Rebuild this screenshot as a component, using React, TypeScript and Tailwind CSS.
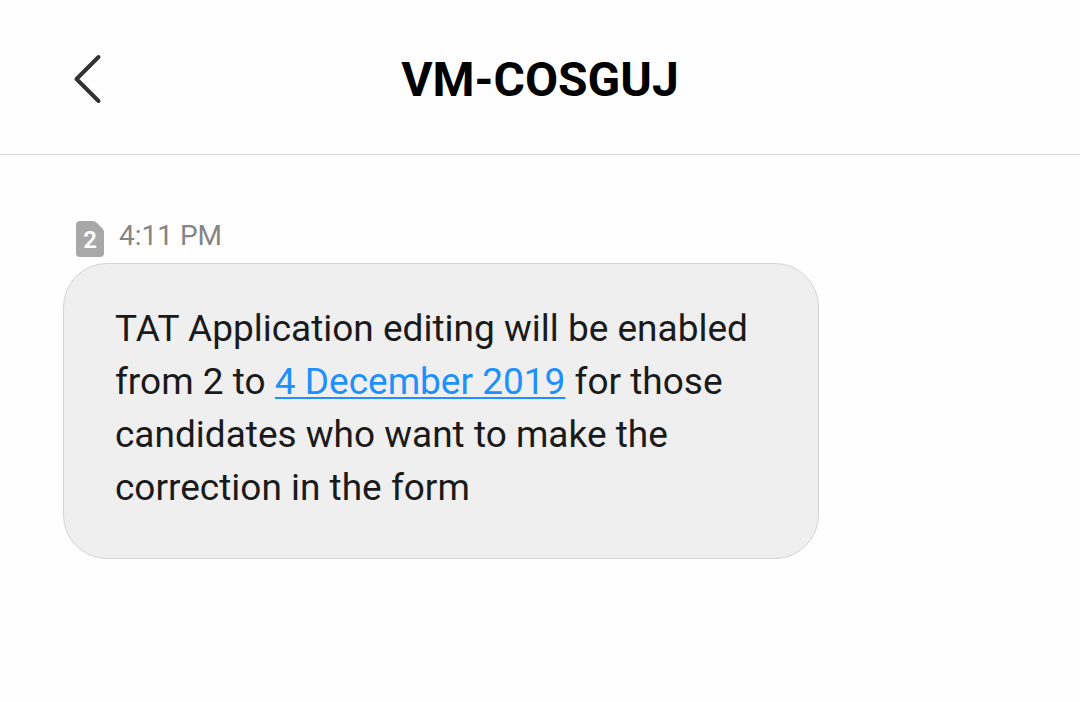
export default function App() {
  return (
    <div className="min-h-screen bg-[#fefefe] font-['Roboto',sans-serif]">
      <header className="grid h-[155px] grid-cols-[1fr_auto_1fr] items-center border-b border-[#dcdcdc] px-[70px] pt-[5px]">
        <button type="button" aria-label="Back" className="w-9">
          <svg viewBox="0 0 36 56" className="h-14 w-9" fill="none" stroke="#333" strokeWidth="4">
            <path d="M28.5 5 6.500 27 28.500 49" strokeLinecap="round" strokeLinejoin="round" />
          </svg>
        </button>
        <h1 className="text-[48px] leading-[56px] font-bold text-black">VM-COSGUJ</h1>
      </header>
      <main className="px-[63px] pt-[65px]">
        <div className="flex h-[43px] items-start gap-[15px] pl-[13px]">
          <svg viewBox="0 0 28 37" className="h-[37px] w-7" role="img" aria-label="SIM 2">
            <path d="M4 1H17Q19 1 20.500 2.500L26.500 8.500Q28 10 28 12V33Q28 37 24 37H4Q0 37 0 33V5Q0 1 4 1Z" fill="#a8a8a8" />
            <text x="14" y="28" textAnchor="middle" fontSize="24" fontWeight="600" fill="#fff">2</text>
          </svg>
          <time className="text-[28px] leading-8 text-[#858585]">4:11 PM</time>
        </div>
        <p className="w-fit max-w-[756px] rounded-[44px] border border-[#d4d4d4] bg-[#efefef] px-[51px] pt-[38px] pb-11 text-[37px] leading-[53px] text-[#1a1a1a]">
          TAT Application editing will be enabled from 2 to{" "}
          <a href="#date" className="text-[#1e90fa] underline decoration-2 underline-offset-3">4 December 2019</a> for those candidates who want to make the correction in the form
        </p>
      </main>
    </div>
  );
}
